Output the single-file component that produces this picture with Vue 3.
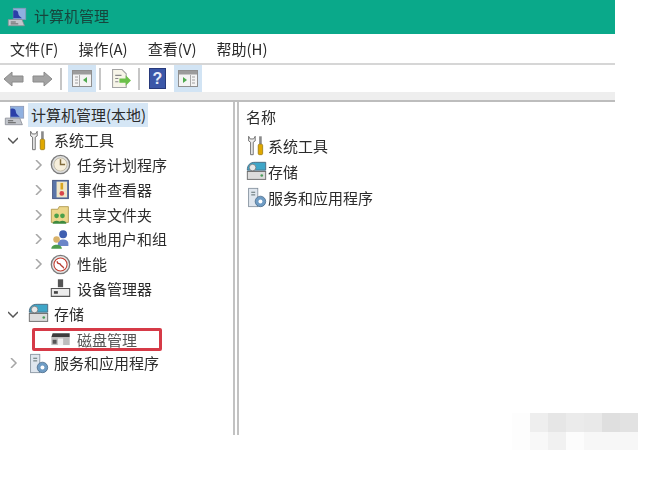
<template>
  <div class="page">
    <div class="window">
      <header class="titlebar">
        <svg class="appicon" viewBox="0 0 16 16" width="20" height="20">
          <use href="#mgmt" />
        </svg>
        <span class="title">计算机管理</span>
      </header>

      <nav class="menubar">
        <span v-for="m in menus" :key="m">{{ m }}</span>
      </nav>

      <div class="toolbar">
        <svg class="arrow" viewBox="0 0 21 16" width="21" height="16">
          <path d="M1 8l8-7v4h11v6H9v4z" fill="#a3a3a3" stroke="#8a8a8a" />
        </svg>
        <svg class="arrow second" viewBox="0 0 21 16" width="21" height="16">
          <path d="M20 8l-8-7v4H1v6h11v4z" fill="#a3a3a3" stroke="#8a8a8a" />
        </svg>
        <i class="sep first"></i>
        <span class="btn on near">
          <svg viewBox="0 0 20 17" width="20" height="17">
            <rect x=".5" y=".5" width="19" height="16" fill="#f4f4f4" stroke="#8f8f8f" />
            <rect x="1" y="1" width="18" height="3.500" fill="#9c9c9c" />
            <path d="M7.500 5v11" stroke="#a8a8a8" />
            <path d="M3 7h3M3 10h3M3 13h3" stroke="#a0a0a0" stroke-width="1.200" />
            <path d="M15 7v6l-4-3z" fill="#4faa4f" />
          </svg>
        </span>
        <i class="sep"></i>
        <span class="btn doc">
          <svg viewBox="0 0 20 18" width="21" height="19">
            <path d="M1.500.5h9l4 4v13h-13z" fill="#f7f5e8" stroke="#a3a3a3" />
            <path d="M4 6h6M4 9h3M4 12h3" stroke="#888" />
            <path d="M8 9h6V6l5 5-5 5v-3H8z" fill="#6cc04a" />
          </svg>
        </span>
        <i class="sep"></i>
        <span class="btn help-btn">
          <svg viewBox="0 0 17 21" width="17" height="21">
            <rect x=".5" y=".5" width="16" height="20" fill="#3b57a8" stroke="#27397a" />
            <text x="8.500" y="16" text-anchor="middle" class="help">?</text>
          </svg>
        </span>
        <span class="btn on">
          <svg viewBox="0 0 20 17" width="20" height="17">
            <rect x=".5" y=".5" width="19" height="16" fill="#f4f4f4" stroke="#8f8f8f" />
            <rect x="1" y="1" width="18" height="3.500" fill="#9c9c9c" />
            <path d="M12.500 5v11" stroke="#a8a8a8" />
            <path d="M14 7h3M14 10h3M14 13h3" stroke="#a0a0a0" stroke-width="1.200" />
            <path d="M5 7v6l4-3z" fill="#4faa4f" />
          </svg>
        </span>
      </div>
      <div class="band"></div>

      <div class="panes">
        <aside class="tree">
          <div
            v-for="row in tree"
            :key="row.label"
            class="row"
            :class="'lvl' + row.level"
          >
            <svg v-if="row.caret" class="caret" viewBox="0 0 10 10" width="10" height="10">
              <path v-if="row.caret === 'open'" d="M0 3l5 5 5-5" class="c-open" />
              <path v-else d="M3 0l5 5-5 5" class="c-closed" />
            </svg>
            <span v-else-if="row.level > 0" class="caret"></span>
            <svg class="ic" viewBox="0 0 16 16" width="21" height="21">
              <use :href="'#' + row.icon" />
            </svg>
            <span class="label" :class="{ selected: row.selected, dim: row.marked }">{{ row.label }}</span>
            <span v-if="row.marked" class="mark"></span>
          </div>
        </aside>

        <main class="list">
          <div class="head">名称</div>
          <div v-for="row in items" :key="row.label" class="item">
            <svg class="ic" viewBox="0 0 16 16" width="21" height="21">
              <use :href="'#' + row.icon" />
            </svg>
            <span>{{ row.label }}</span>
          </div>
        </main>
      </div>
    </div>

    <div class="mosaic">
      <i v-for="(c, i) in mosaic" :key="i" :style="{ background: c }"></i>
    </div>

    <svg width="0" height="0" class="defs">
      <symbol id="mgmt" viewBox="0 0 16 16">
        <rect x="5" y="1" width="10" height="9" fill="#8fb0e0" stroke="#8a97b4" stroke-width=".6" />
        <path d="M5 3c2-1 4 0 4 2s2 3 3 4H5z" fill="#2a3fa8" />
        <path d="M1 10h11l2 5H1z" fill="#c3c6cc" stroke="#868a92" stroke-width=".6" />
        <path d="M3 12h4M3 13.500h6" stroke="#555" stroke-width=".7" />
      </symbol>
      <symbol id="tools" viewBox="0 0 16 16">
        <path d="M2 1v3.500l1.500 1V15h2V5.500L7 4.500V1L5.800 3H3.200z" fill="#eeeeee" stroke="#6a6a6a" stroke-width=".7" />
        <rect x="10" y="1" width="2" height="6" fill="#8a8a8a" />
        <rect x="9.300" y="7" width="3.400" height="8" rx="1" fill="#e0a800" stroke="#8a6a00" stroke-width=".5" />
      </symbol>
      <symbol id="clock" viewBox="0 0 16 16">
        <circle cx="8" cy="8" r="7" fill="#dedede" stroke="#7b7b7b" />
        <circle cx="8" cy="8" r="5" fill="#f7efdc" stroke="#b0a890" stroke-width=".5" />
        <path d="M8 4v4h3.500" fill="none" stroke="#806a3a" stroke-width="1.100" />
      </symbol>
      <symbol id="event" viewBox="0 0 16 16">
        <rect x="2" y="1" width="12" height="14" fill="#5a74a8" stroke="#3a4a78" stroke-width=".6" />
        <rect x="5" y="2" width="8" height="12" fill="#f0e6c8" />
        <rect x="8" y="3" width="2" height="5" fill="#d9a520" />
        <circle cx="9" cy="11" r="1.800" fill="#d8454a" />
      </symbol>
      <symbol id="share" viewBox="0 0 16 16">
        <path d="M1 4h5l1-2h7v12H1z" fill="#ecd68a" stroke="#a88f3e" stroke-width=".6" />
        <circle cx="5" cy="9" r="1.800" fill="#4aa04a" />
        <circle cx="9.500" cy="9" r="1.800" fill="#4aa04a" />
        <path d="M2 15c0-3 6-3 6 0zM6.500 15c0-3 6-3 6 0z" fill="#3e8a3e" />
      </symbol>
      <symbol id="users" viewBox="0 0 16 16">
        <circle cx="10" cy="4" r="3" fill="#3f5fb0" />
        <path d="M6 11c0-4 8-4 8 0v2H6z" fill="#6c86c8" />
        <circle cx="5" cy="8" r="2.500" fill="#d9b26a" />
        <path d="M1 15c0-4 8-4 8 0z" fill="#4d9c4d" />
      </symbol>
      <symbol id="perf" viewBox="0 0 16 16">
        <circle cx="8" cy="8" r="7" fill="#e6e6e6" stroke="#7b7b7b" />
        <circle cx="8" cy="8" r="5" fill="#fff" stroke="#c0392b" stroke-width=".8" />
        <path d="M5.500 5.500c0 3 2 1 2.500 2.500s2 1 2.500 3" fill="none" stroke="#b53a30" stroke-width="1" />
      </symbol>
      <symbol id="device" viewBox="0 0 16 16">
        <rect x="6" y="1" width="4" height="6" fill="#555" />
        <path d="M1 8h14v6H1z" fill="#ececec" stroke="#555" stroke-width=".8" />
        <rect x="3" y="10" width="3" height="2" fill="#444" />
      </symbol>
      <symbol id="storage" viewBox="0 0 16 16">
        <rect x="1" y="8" width="14" height="6" fill="#dcdcdc" stroke="#6a6a6a" stroke-width=".7" />
        <path d="M1 7c0-4 2-6 6-6h8v6z" fill="#3fa6c8" stroke="#4a6a80" stroke-width=".7" />
        <circle cx="5" cy="5" r="2.500" fill="#e8e8e8" stroke="#666" stroke-width=".5" />
        <circle cx="12" cy="11" r="1" fill="#4a9c5a" />
      </symbol>
      <symbol id="disk" viewBox="0 0 16 16">
        <path d="M2 4h13v3H1z" fill="#3d3d3d" />
        <path d="M1 7h14v6H1z" fill="#bdbdbd" />
        <rect x="6" y="8" width="4" height="5" fill="#f0f0f0" />
        <rect x="2" y="9" width="3" height="3" fill="#555" />
      </symbol>
      <symbol id="services" viewBox="0 0 16 16">
        <rect x="2" y="1" width="7" height="14" fill="#dfe6ee" stroke="#7c8896" stroke-width=".6" />
        <path d="M4 4h3M4 6h3" stroke="#566" stroke-width=".7" />
        <circle cx="11" cy="11" r="4" fill="#6f9cc4" stroke="#4a6a88" stroke-width=".6" />
        <circle cx="11" cy="11" r="1.500" fill="#fff" />
      </symbol>
    </svg>
  </div>
</template>

<script setup>
const menus = ["文件(F)", "操作(A)", "查看(V)", "帮助(H)"];

const tree = [
  { label: "计算机管理(本地)", level: 0, icon: "mgmt", selected: true },
  { label: "系统工具", level: 1, icon: "tools", caret: "open" },
  { label: "任务计划程序", level: 2, icon: "clock", caret: "closed" },
  { label: "事件查看器", level: 2, icon: "event", caret: "closed" },
  { label: "共享文件夹", level: 2, icon: "share", caret: "closed" },
  { label: "本地用户和组", level: 2, icon: "users", caret: "closed" },
  { label: "性能", level: 2, icon: "perf", caret: "closed" },
  { label: "设备管理器", level: 2, icon: "device" },
  { label: "存储", level: 1, icon: "storage", caret: "open" },
  { label: "磁盘管理", level: 2, icon: "disk", marked: true },
  { label: "服务和应用程序", level: 1, icon: "services", caret: "closed" },
];

const items = [
  { label: "系统工具", icon: "tools" },
  { label: "存储", icon: "storage" },
  { label: "服务和应用程序", icon: "services" },
];

const mosaic = [
  "#fdfdfd", "#eeeeee", "#e6e6e6", "#ebebeb", "#e9e9e9", "#dfdfdf", "#e2e2e2",
  "#fdfdfd", "#f8f8f8", "#f1f1f1", "#fcfcfc", "#f7f7f7", "#f7f7f7", "#f7f7f7",
];
</script>

<style>
html, body {
  background: #fff;
}
</style>

<style scoped>
.page {
  position: relative;
  width: 647px;
  height: 484px;
  overflow: hidden;
  background: #fff;
  font-family: "Noto Sans CJK SC", "Liberation Sans", sans-serif;
  color: #2b2b2b;
}
.window {
  width: 615px;
  filter: blur(0.5px);
}
.titlebar {
  height: 34px;
  background: #0aa98a;
  display: flex;
  align-items: center;
  gap: 7px;
  padding-left: 7px;
  font-size: 15px;
  color: #17443c;
}
.title {
  margin-top: -4px;
}
.menubar {
  height: 29px;
  display: flex;
  align-items: center;
  gap: 20px;
  padding-left: 10px;
  font-size: 15px;
  border-bottom: 2px solid #d6d6d6;
}
.toolbar {
  height: 27px;
  display: flex;
  align-items: center;
  padding-left: 3px;
  gap: 3px;
}
.arrow.second {
  margin-left: 5px;
}
.sep {
  width: 2px;
  height: 22px;
  background: #c6c6c6;
}
.sep.first {
  margin-left: 4px;
  margin-right: 3px;
}
.btn {
  width: 28px;
  height: 27px;
  display: flex;
  align-items: center;
  justify-content: center;
}
.btn.on {
  background: #d2e4f4;
}
.btn.doc {
  margin-left: 3px;
}
.btn.help-btn {
  margin-left: 0;
}
.help {
  font: bold 16px "Liberation Sans", sans-serif;
  fill: #e6ecf8;
}
.band {
  height: 8px;
  background: #eeeeee;
  border-bottom: 2px solid #bdbdbd;
}
.panes {
  height: 333px;
  display: flex;
}
.tree {
  width: 233px;
  flex: none;
  padding-top: 1px;
  font-size: 15px;
  border-right: 2px solid #c2c2c2;
}
.list {
  flex: 1;
  margin-left: 2px;
  border-left: 2px solid #c2c2c2;
  padding-left: 7px;
  font-size: 15px;
}
.row {
  height: 24.800px;
  display: flex;
  align-items: center;
  position: relative;
}
.lvl0 {
  padding-left: 4px;
}
.lvl1 {
  padding-left: 8px;
}
.lvl2 {
  padding-left: 33px;
}
.caret {
  width: 10px;
  height: 10px;
  flex: none;
  margin-right: 7px;
}
.lvl1 .caret {
  margin-right: 10px;
}
.lvl1 .ic {
  margin-right: 5px;
}
.c-open {
  fill: none;
  stroke: #555;
  stroke-width: 1.500;
}
.c-closed {
  fill: none;
  stroke: #a6a6a6;
  stroke-width: 1.500;
}
.ic {
  flex: none;
  margin-right: 6px;
}
.label {
  line-height: 24px;
}
.lvl0 .label {
  margin-left: -3px;
  padding: 0 2px 0 3px;
}
.selected {
  background: #d5e6f5;
}
.dim {
  color: #555;
  margin-top: 2px;
}
.mark {
  position: absolute;
  left: 32px;
  top: 2px;
  width: 124px;
  height: 17px;
  border: 3px solid #d63a47;
  border-radius: 2px;
}
.head {
  height: 24px;
  padding-top: 4px;
  margin-bottom: 2px;
}
.item {
  height: 26px;
  display: flex;
  align-items: center;
}
.item .ic {
  margin-right: 1px;
}
.mosaic {
  position: absolute;
  left: 512px;
  top: 413px;
  display: grid;
  grid-template-columns: repeat(7, 18px);
  grid-template-rows: repeat(2, 18.500px);
}
.defs {
  position: absolute;
}
</style>
